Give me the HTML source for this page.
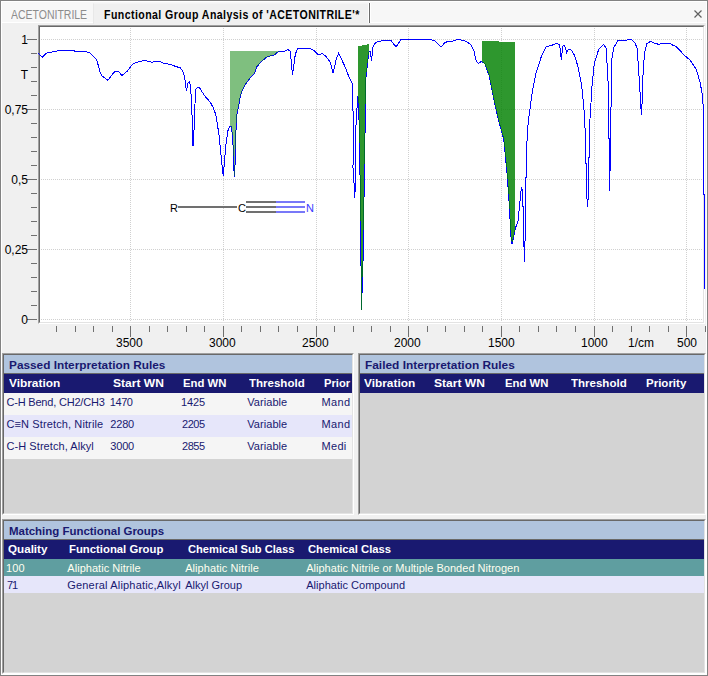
<!DOCTYPE html>
<html><head><meta charset="utf-8">
<style>
*{margin:0;padding:0;box-sizing:border-box}
html,body{width:708px;height:676px;overflow:hidden;background:#f0f0f0;font-family:"Liberation Sans",sans-serif}
.a{position:absolute;white-space:pre;line-height:1}
.box{position:absolute}
.t11{font-size:11px}
.b{font-weight:bold}
.nv{color:#191970}
.wh{color:#fff}
.ax{font-size:12px;color:#000}
.sunk{position:absolute;border-top:1px solid #a0a0a0;border-left:1px solid #a0a0a0;border-right:1px solid #fff;border-bottom:1px solid #fff}
.sunk>div.in{position:absolute;left:0;top:0;right:0;bottom:0;border-top:1px solid #696969;border-left:1px solid #696969;border-right:1px solid #e3e3e3;border-bottom:1px solid #e3e3e3}
</style></head><body>
<!-- window border -->
<div class="box" style="left:0;top:0;width:708px;height:676px;border:1px solid #828282"></div>
<div class="box" style="left:1px;top:1px;width:706px;height:674px;border:1px solid #fff"></div>
<!-- tab strip -->
<div class="box" style="left:2px;top:2px;width:704px;height:20px;background:#f7f7f7"></div>
<div class="box" style="left:2px;top:22px;width:704px;height:1px;background:#fff"></div>
<div class="box" style="left:93px;top:3px;width:275px;height:21px;background:#f0f0f0;border-left:1px solid #e8e8e8;border-top:1px solid #f4f4f4"></div>
<div class="box" style="left:368px;top:3px;width:1px;height:20px;background:#fff"></div>
<div class="box" style="left:369px;top:3px;width:1px;height:20px;background:#6b6b6b"></div>
<div class="box" style="left:370px;top:3px;width:1px;height:20px;background:#fff"></div>
<svg class="box" style="left:0;top:0" width="708" height="30">
<path d="M694.5 10.5 L701.5 17.5 M701.5 10.5 L694.5 17.5" stroke="#606060" stroke-width="1.2" fill="none"/>
</svg>

<!-- chart -->
<div class="sunk" style="left:38px;top:25px;width:667px;height:299px;background:#fff"><div class="in"></div></div>
<svg class="box" style="left:0;top:0" width="708" height="352">
<g stroke="#d0d0d0" stroke-width="1" stroke-dasharray="1,1" shape-rendering="crispEdges">
<line x1="130.5" y1="28" x2="130.5" y2="322" />
<line x1="223.5" y1="28" x2="223.5" y2="322" />
<line x1="316.5" y1="28" x2="316.5" y2="322" />
<line x1="408.5" y1="28" x2="408.5" y2="322" />
<line x1="501.5" y1="28" x2="501.5" y2="322" />
<line x1="594.5" y1="28" x2="594.5" y2="322" />
<line x1="686.5" y1="28" x2="686.5" y2="322" />
<line x1="41" y1="39.5" x2="703" y2="39.5" />
<line x1="41" y1="109.5" x2="703" y2="109.5" />
<line x1="41" y1="179.5" x2="703" y2="179.5" />
<line x1="41" y1="249.5" x2="703" y2="249.5" />
<line x1="41" y1="319.5" x2="703" y2="319.5" />
</g>
<g stroke="#707070" stroke-width="1" shape-rendering="crispEdges">
<line x1="27" y1="39.5" x2="37" y2="39.5" />
<line x1="31" y1="53.5" x2="37" y2="53.5" />
<line x1="31" y1="67.5" x2="37" y2="67.5" />
<line x1="31" y1="81.5" x2="37" y2="81.5" />
<line x1="31" y1="95.5" x2="37" y2="95.5" />
<line x1="27" y1="109.5" x2="37" y2="109.5" />
<line x1="31" y1="123.5" x2="37" y2="123.5" />
<line x1="31" y1="137.5" x2="37" y2="137.5" />
<line x1="31" y1="151.5" x2="37" y2="151.5" />
<line x1="31" y1="165.5" x2="37" y2="165.5" />
<line x1="27" y1="179.5" x2="37" y2="179.5" />
<line x1="31" y1="193.5" x2="37" y2="193.5" />
<line x1="31" y1="207.5" x2="37" y2="207.5" />
<line x1="31" y1="221.5" x2="37" y2="221.5" />
<line x1="31" y1="235.5" x2="37" y2="235.5" />
<line x1="27" y1="249.5" x2="37" y2="249.5" />
<line x1="31" y1="263.5" x2="37" y2="263.5" />
<line x1="31" y1="277.5" x2="37" y2="277.5" />
<line x1="31" y1="291.5" x2="37" y2="291.5" />
<line x1="31" y1="305.5" x2="37" y2="305.5" />
<line x1="27" y1="319.5" x2="37" y2="319.5" />
<line x1="56.5" y1="326" x2="56.5" y2="332" />
<line x1="75.5" y1="326" x2="75.5" y2="332" />
<line x1="93.5" y1="326" x2="93.5" y2="332" />
<line x1="112.5" y1="326" x2="112.5" y2="332" />
<line x1="130.5" y1="326" x2="130.5" y2="337" />
<line x1="149.5" y1="326" x2="149.5" y2="332" />
<line x1="167.5" y1="326" x2="167.5" y2="332" />
<line x1="186.5" y1="326" x2="186.5" y2="332" />
<line x1="204.5" y1="326" x2="204.5" y2="332" />
<line x1="223.5" y1="326" x2="223.5" y2="337" />
<line x1="241.5" y1="326" x2="241.5" y2="332" />
<line x1="260.5" y1="326" x2="260.5" y2="332" />
<line x1="278.5" y1="326" x2="278.5" y2="332" />
<line x1="297.5" y1="326" x2="297.5" y2="332" />
<line x1="316.5" y1="326" x2="316.5" y2="337" />
<line x1="334.5" y1="326" x2="334.5" y2="332" />
<line x1="353.5" y1="326" x2="353.5" y2="332" />
<line x1="371.5" y1="326" x2="371.5" y2="332" />
<line x1="390.5" y1="326" x2="390.5" y2="332" />
<line x1="408.5" y1="326" x2="408.5" y2="337" />
<line x1="427.5" y1="326" x2="427.5" y2="332" />
<line x1="445.5" y1="326" x2="445.5" y2="332" />
<line x1="464.5" y1="326" x2="464.5" y2="332" />
<line x1="482.5" y1="326" x2="482.5" y2="332" />
<line x1="501.5" y1="326" x2="501.5" y2="337" />
<line x1="519.5" y1="326" x2="519.5" y2="332" />
<line x1="538.5" y1="326" x2="538.5" y2="332" />
<line x1="556.5" y1="326" x2="556.5" y2="332" />
<line x1="575.5" y1="326" x2="575.5" y2="332" />
<line x1="594.5" y1="326" x2="594.5" y2="337" />
<line x1="612.5" y1="326" x2="612.5" y2="332" />
<line x1="631.5" y1="326" x2="631.5" y2="332" />
<line x1="649.5" y1="326" x2="649.5" y2="332" />
<line x1="668.5" y1="326" x2="668.5" y2="332" />
<line x1="686.5" y1="326" x2="686.5" y2="337" />
<line x1="705.5" y1="326" x2="705.5" y2="332" />
</g>
<polyline points="38.0,53.2 42.5,57.1 45.9,53.7 48.7,52.4 53.8,51.7 59.5,50.6 73.0,50.6 75.3,51.2 85.5,51.5 90.5,53.2 96.8,59.9 99.6,70.7 101.8,75.8 108.0,80.3 110.0,77.5 113.7,72.4 115.9,71.2 118.5,71.5 121.9,75.4 127.0,71.5 132.9,63.9 139.7,61.4 145.6,60.5 151.5,62.2 156.6,61.4 160.8,61.7 163.4,63.4 171.0,64.4 175.0,66.2 180.2,67.9 182.8,71.0 184.3,75.7 185.4,81.9 186.4,91.2 188.0,83.0 189.5,81.4 190.5,86.0 191.6,103.7 192.4,125.0 193.0,146.0 194.0,130.0 194.7,125.0 195.0,103.7 195.7,89.2 197.8,87.3 199.8,88.1 203.0,93.3 206.0,97.4 210.2,102.1 213.3,107.8 215.9,115.0 217.4,125.0 218.8,133.0 220.6,150.6 222.3,168.0 223.3,175.9 224.6,160.0 226.0,144.0 228.0,130.6 230.0,126.0 231.3,126.6 232.6,136.0 233.3,150.6 234.0,170.6 234.6,177.2 235.3,157.0 236.0,130.6 237.1,113.0 238.6,106.7 240.3,96.1 242.3,90.5 245.4,84.2 250.5,77.5 254.7,73.2 256.4,67.3 260.7,62.2 266.6,57.1 270.8,55.9 274.2,55.1 278.5,51.5 284.4,51.2 287.8,49.5 290.3,51.2 292.5,74.9 295.4,53.7 298.0,48.3 309.8,48.3 314.0,50.3 318.3,54.6 322.5,53.7 325.9,56.3 330.2,62.2 333.2,73.2 336.1,59.7 338.6,53.1 345.3,67.3 349.1,77.5 352.5,84.3 352.5,110.0 353.4,111.5 353.4,130.0 353.0,167.5 354.3,188.0 354.5,198.0 355.4,188.0 355.4,156.0 356.2,116.0 357.2,106.0 357.9,95.8 358.6,104.7 359.3,130.0 360.4,200.0 360.4,210.0 361.3,292.0 361.5,310.0 363.1,258.0 364.4,171.0 365.4,110.0 366.0,77.0 367.4,64.0 368.8,52.0 370.2,51.6 371.5,61.0 372.9,47.5 375.0,43.4 377.5,41.9 384.2,40.2 391.0,40.5 396.1,47.0 401.2,39.3 430.0,39.3 435.1,41.0 441.0,47.0 445.3,42.2 452.7,41.0 458.6,39.3 465.4,41.0 470.5,44.4 473.9,50.3 475.6,59.7 478.1,63.4 481.5,61.4 484.9,63.9 489.2,75.8 494.2,101.2 498.5,120.0 503.7,139.0 507.2,174.4 509.6,210.0 510.8,236.0 512.0,244.3 515.5,227.7 517.9,221.8 519.8,202.8 521.4,187.5 522.6,191.0 523.8,236.0 524.3,262.0 525.0,243.0 525.4,200.5 526.6,155.5 527.3,131.8 528.5,120.0 532.4,91.0 535.8,74.0 541.7,55.4 545.9,47.0 551.9,45.3 556.7,43.3 559.6,44.8 560.7,53.7 561.4,60.3 562.6,46.3 564.0,44.8 566.0,50.0 566.6,53.7 567.8,50.0 570.7,49.2 574.4,55.1 578.1,67.0 581.8,86.2 584.0,110.0 584.3,120.0 585.4,133.0 585.4,163.0 586.6,163.0 586.6,192.5 587.5,207.0 588.4,195.4 588.4,157.0 589.6,157.0 589.6,130.0 590.0,118.8 592.2,83.3 594.4,62.5 598.8,49.2 603.6,44.3 606.2,48.5 607.7,74.4 608.4,89.2 608.2,120.0 608.2,137.8 609.5,138.5 609.5,191.0 610.5,152.5 610.5,130.0 611.4,89.2 611.8,59.6 613.6,47.8 618.0,40.4 626.7,40.1 631.1,39.3 634.8,42.6 637.0,47.8 638.5,67.0 640.0,92.1 641.4,115.0 642.2,101.0 642.9,77.3 644.4,53.7 646.6,44.0 650.3,41.4 654.0,42.9 658.5,44.3 662.9,43.3 670.3,43.3 673.3,45.5 676.2,46.6 680.7,51.4 685.1,55.9 690.3,60.3 696.2,69.2 699.9,81.8 702.8,96.6 703.5,120.0 703.5,194.0 704.4,194.0 704.4,288.6" fill="none" stroke="#0000ff" stroke-width="1" shape-rendering="crispEdges"/>
<polygon points="230.2,51.2 278.5,51.2 278.5,51.5 274.2,55.1 270.8,55.9 266.6,57.1 260.7,62.2 256.4,67.3 254.7,73.2 250.5,77.5 245.4,84.2 242.3,90.5 240.3,96.1 238.6,106.7 237.1,113.0 236.0,130.6 235.3,157.0 234.6,177.2 234.0,170.6 233.3,150.6 232.6,136.0 231.3,126.6 230.2,126.1" fill="rgba(0,128,0,0.5)" stroke="none" shape-rendering="crispEdges"/>
<polygon points="358.0,46.2 369.0,44.1 369.0,51.9 368.8,52.0 367.4,64.0 366.0,77.0 365.4,110.0 364.4,171.0 363.1,258.0 361.5,310.0 361.3,292.0 360.4,210.0 360.4,200.0 359.3,130.0 358.6,104.7 358.0,97.1" fill="rgba(0,128,0,0.82)" stroke="none" shape-rendering="crispEdges"/>
<polygon points="482.0,41.0 498.5,41.0 498.5,42.2 515.0,42.2 515.0,230.1 512.0,244.3 510.8,236.0 509.6,210.0 507.2,174.4 503.7,139.0 498.5,120.0 494.2,101.2 489.2,75.8 484.9,63.9 482.0,61.8" fill="rgba(0,128,0,0.82)" stroke="none" shape-rendering="crispEdges"/>
<!-- structure -->
<g shape-rendering="crispEdges">
<rect x="178" y="206" width="59" height="2" fill="#707070"/>
<rect x="246" y="201" width="30" height="2" fill="#707070"/>
<rect x="246" y="206" width="30" height="2" fill="#707070"/>
<rect x="246" y="211" width="30" height="2" fill="#707070"/>
<rect x="276" y="201" width="29" height="2" fill="#7878f8"/>
<rect x="276" y="206" width="29" height="2" fill="#7878f8"/>
<rect x="276" y="211" width="29" height="2" fill="#7878f8"/>
</g>
</svg>
<div class="a" style="left:170px;top:203px;font-size:11px;color:#000">R</div>
<div class="a" style="left:238px;top:203px;font-size:11px;color:#000">C</div>
<div class="a" style="left:306px;top:203px;font-size:11px;color:#3a3aff">N</div>

<!-- y labels -->
<div class="a ax" style="right:680px;top:34px">1</div>
<div class="a ax" style="right:680px;top:69px">T</div>
<div class="a ax" style="right:680px;top:104px">0,75</div>
<div class="a ax" style="right:680px;top:174px">0,5</div>
<div class="a ax" style="right:680px;top:244px">0,25</div>
<div class="a ax" style="right:680px;top:314px">0</div>
<!-- x labels -->
<div class="a ax" style="left:116px;top:337px">3500</div>
<div class="a ax" style="left:209px;top:337px">3000</div>
<div class="a ax" style="left:302px;top:337px">2500</div>
<div class="a ax" style="left:394px;top:337px">2000</div>
<div class="a ax" style="left:488px;top:337px">1500</div>
<div class="a ax" style="left:581px;top:337px">1000</div>
<div class="a ax" style="left:628px;top:337px">1/cm</div>
<div class="a ax" style="left:677px;top:337px">500</div>

<!-- left panel -->
<div class="sunk" style="left:2px;top:353px;width:352px;height:162px;background:#d3d3d3"><div class="in"></div></div>
<div class="box" style="left:4px;top:355px;width:348px;height:18px;background:#b0c4de"></div>
<div class="box" style="left:4px;top:373px;width:348px;height:1px;background:#696969"></div>
<div class="box" style="left:4px;top:374px;width:348px;height:19px;background:#191970"></div>
<div class="box" style="left:4px;top:393px;width:348px;height:22px;background:#f5f5f5"></div>
<div class="box" style="left:4px;top:415px;width:348px;height:22px;background:#e6e6fa"></div>
<div class="box" style="left:4px;top:437px;width:348px;height:22px;background:#f5f5f5"></div>

<!-- right panel -->
<div class="sunk" style="left:358px;top:353px;width:348px;height:162px;background:#d3d3d3"><div class="in"></div></div>
<div class="box" style="left:360px;top:355px;width:344px;height:18px;background:#b0c4de"></div>
<div class="box" style="left:360px;top:373px;width:344px;height:1px;background:#696969"></div>
<div class="box" style="left:360px;top:374px;width:344px;height:19px;background:#191970"></div>

<!-- bottom panel -->
<div class="sunk" style="left:2px;top:519px;width:704px;height:155px;background:#d3d3d3"><div class="in"></div></div>
<div class="box" style="left:4px;top:521px;width:700px;height:18px;background:#b0c4de"></div>
<div class="box" style="left:4px;top:539px;width:700px;height:1px;background:#696969"></div>
<div class="box" style="left:4px;top:540px;width:700px;height:19px;background:#191970"></div>
<div class="box" style="left:4px;top:559px;width:700px;height:17px;background:#5f9ea0"></div>
<div class="box" style="left:4px;top:576px;width:700px;height:17px;background:#e6e6fa"></div>
<div class="a" style="left:11.00px;top:9px;font-size:12px;letter-spacing:0.000px;color:#8c8c8c;transform:scaleX(0.8736);transform-origin:0 0">ACETONITRILE</div>
<div class="a" style="left:104.00px;top:9px;font-size:12px;font-weight:bold;letter-spacing:0.489px;color:#000;transform:scaleX(0.88);transform-origin:0 0">Functional Group Analysis of 'ACETONITRILE'*</div>
<div class="a" style="left:9.00px;top:360px;font-size:11px;font-weight:bold;letter-spacing:0.000px;color:#191970;transform:scaleX(1.0745);transform-origin:0 0">Passed Interpretation Rules</div>
<div class="a" style="left:364.50px;top:360px;font-size:11px;font-weight:bold;letter-spacing:0.000px;color:#191970;transform:scaleX(1.0799);transform-origin:0 0">Failed Interpretation Rules</div>
<div class="a" style="left:8.60px;top:526px;font-size:11px;font-weight:bold;letter-spacing:0.000px;color:#191970;transform:scaleX(1.0409);transform-origin:0 0">Matching Functional Groups</div>
<div class="a" style="left:8.00px;top:544px;font-size:11px;font-weight:bold;letter-spacing:0.000px;color:#fff;transform:scaleX(1.0579);transform-origin:0 0">Quality</div>
<div class="a" style="left:69.30px;top:544px;font-size:11px;font-weight:bold;letter-spacing:0.000px;color:#fff;transform:scaleX(1.0293);transform-origin:0 0">Functional Group</div>
<div class="a" style="left:187.50px;top:544px;font-size:11px;font-weight:bold;letter-spacing:0.000px;color:#fff;transform:scaleX(1.0124);transform-origin:0 0">Chemical Sub Class</div>
<div class="a" style="left:308.20px;top:544px;font-size:11px;font-weight:bold;letter-spacing:0.000px;color:#fff;transform:scaleX(1.0222);transform-origin:0 0">Chemical Class</div>
<div class="a" style="left:6.00px;top:563px;font-size:11px;letter-spacing:0.100px;color:#fffff0">100</div>
<div class="a" style="left:67.30px;top:563px;font-size:11px;letter-spacing:0.038px;color:#fffff0">Aliphatic Nitrile</div>
<div class="a" style="left:185.20px;top:563px;font-size:11px;letter-spacing:0.062px;color:#fffff0">Aliphatic Nitrile</div>
<div class="a" style="left:306.20px;top:563px;font-size:11px;letter-spacing:0.023px;color:#fffff0">Aliphatic Nitrile or Multiple Bonded Nitrogen</div>
<div class="a" style="left:7.00px;top:580px;font-size:11px;letter-spacing:-1.000px;color:#191970">71</div>
<div class="a" style="left:67.30px;top:580px;font-size:11px;letter-spacing:0.177px;color:#191970">General Aliphatic,Alkyl</div>
<div class="a" style="left:185.20px;top:580px;font-size:11px;letter-spacing:0.000px;color:#191970">Alkyl Group</div>
<div class="a" style="left:306.20px;top:580px;font-size:11px;letter-spacing:0.024px;color:#191970">Aliphatic Compound</div>
<div class="a" style="left:364.40px;top:378px;font-size:11px;font-weight:bold;letter-spacing:0.000px;color:#fff;transform:scaleX(1.0787);transform-origin:0 0">Vibration</div>
<div class="a" style="left:434.30px;top:378px;font-size:11px;font-weight:bold;letter-spacing:0.000px;color:#fff;transform:scaleX(1.0957);transform-origin:0 0">Start WN</div>
<div class="a" style="left:505.30px;top:378px;font-size:11px;font-weight:bold;letter-spacing:0.000px;color:#fff;transform:scaleX(1.0286);transform-origin:0 0">End WN</div>
<div class="a" style="left:571.40px;top:378px;font-size:11px;font-weight:bold;letter-spacing:0.000px;color:#fff;transform:scaleX(1.0472);transform-origin:0 0">Threshold</div>
<div class="a" style="left:646.30px;top:378px;font-size:11px;font-weight:bold;letter-spacing:0.000px;color:#fff;transform:scaleX(1.0462);transform-origin:0 0">Priority</div>
<div style="position:absolute;left:0;top:0;width:352px;height:676px;overflow:hidden">
<div class="a" style="left:8.50px;top:378px;font-size:11px;font-weight:bold;letter-spacing:0.000px;color:#fff;transform:scaleX(1.0787);transform-origin:0 0">Vibration</div>
<div class="a" style="left:112.60px;top:378px;font-size:11px;font-weight:bold;letter-spacing:0.000px;color:#fff;transform:scaleX(1.0957);transform-origin:0 0">Start WN</div>
<div class="a" style="left:183.20px;top:378px;font-size:11px;font-weight:bold;letter-spacing:0.000px;color:#fff;transform:scaleX(1.0286);transform-origin:0 0">End WN</div>
<div class="a" style="left:249.30px;top:378px;font-size:11px;font-weight:bold;letter-spacing:0.000px;color:#fff;transform:scaleX(1.0472);transform-origin:0 0">Threshold</div>
<div class="a" style="left:324.40px;top:378px;font-size:11px;font-weight:bold;letter-spacing:0.000px;color:#fff;transform:scaleX(1.0154);transform-origin:0 0">Prior</div>
<div class="a" style="left:6.50px;top:397px;font-size:11px;letter-spacing:-0.200px;color:#191970">C-H Bend, CH2/CH3</div>
<div class="a" style="left:109.80px;top:397px;font-size:11px;letter-spacing:-0.433px;color:#191970">1470</div>
<div class="a" style="left:181.00px;top:397px;font-size:11px;letter-spacing:-0.100px;color:#191970">1425</div>
<div class="a" style="left:247.20px;top:397px;font-size:11px;letter-spacing:0.071px;color:#191970">Variable</div>
<div class="a" style="left:321.50px;top:397px;font-size:11px;letter-spacing:0.400px;color:#191970">Mand</div>
<div class="a" style="left:6.50px;top:419px;font-size:11px;letter-spacing:0.116px;color:#191970">C≡N Stretch, Nitrile</div>
<div class="a" style="left:110.30px;top:419px;font-size:11px;letter-spacing:-0.200px;color:#191970">2280</div>
<div class="a" style="left:6.50px;top:441px;font-size:11px;letter-spacing:0.065px;color:#191970">C-H Stretch, Alkyl</div>
<div class="a" style="left:110.30px;top:441px;font-size:11px;letter-spacing:-0.200px;color:#191970">3000</div>
<div class="a" style="left:321.50px;top:441px;font-size:11px;letter-spacing:0.300px;color:#191970">Medi</div>
<div class="a" style="left:182.00px;top:419px;font-size:11px;letter-spacing:-0.433px;color:#191970">2205</div>
<div class="a" style="left:182.00px;top:441px;font-size:11px;letter-spacing:-0.433px;color:#191970">2855</div>
<div class="a" style="left:247.20px;top:419px;font-size:11px;letter-spacing:0.071px;color:#191970">Variable</div>
<div class="a" style="left:247.20px;top:441px;font-size:11px;letter-spacing:0.071px;color:#191970">Variable</div>
<div class="a" style="left:321.50px;top:419px;font-size:11px;letter-spacing:0.400px;color:#191970">Mand</div>
</div>
</body></html>
